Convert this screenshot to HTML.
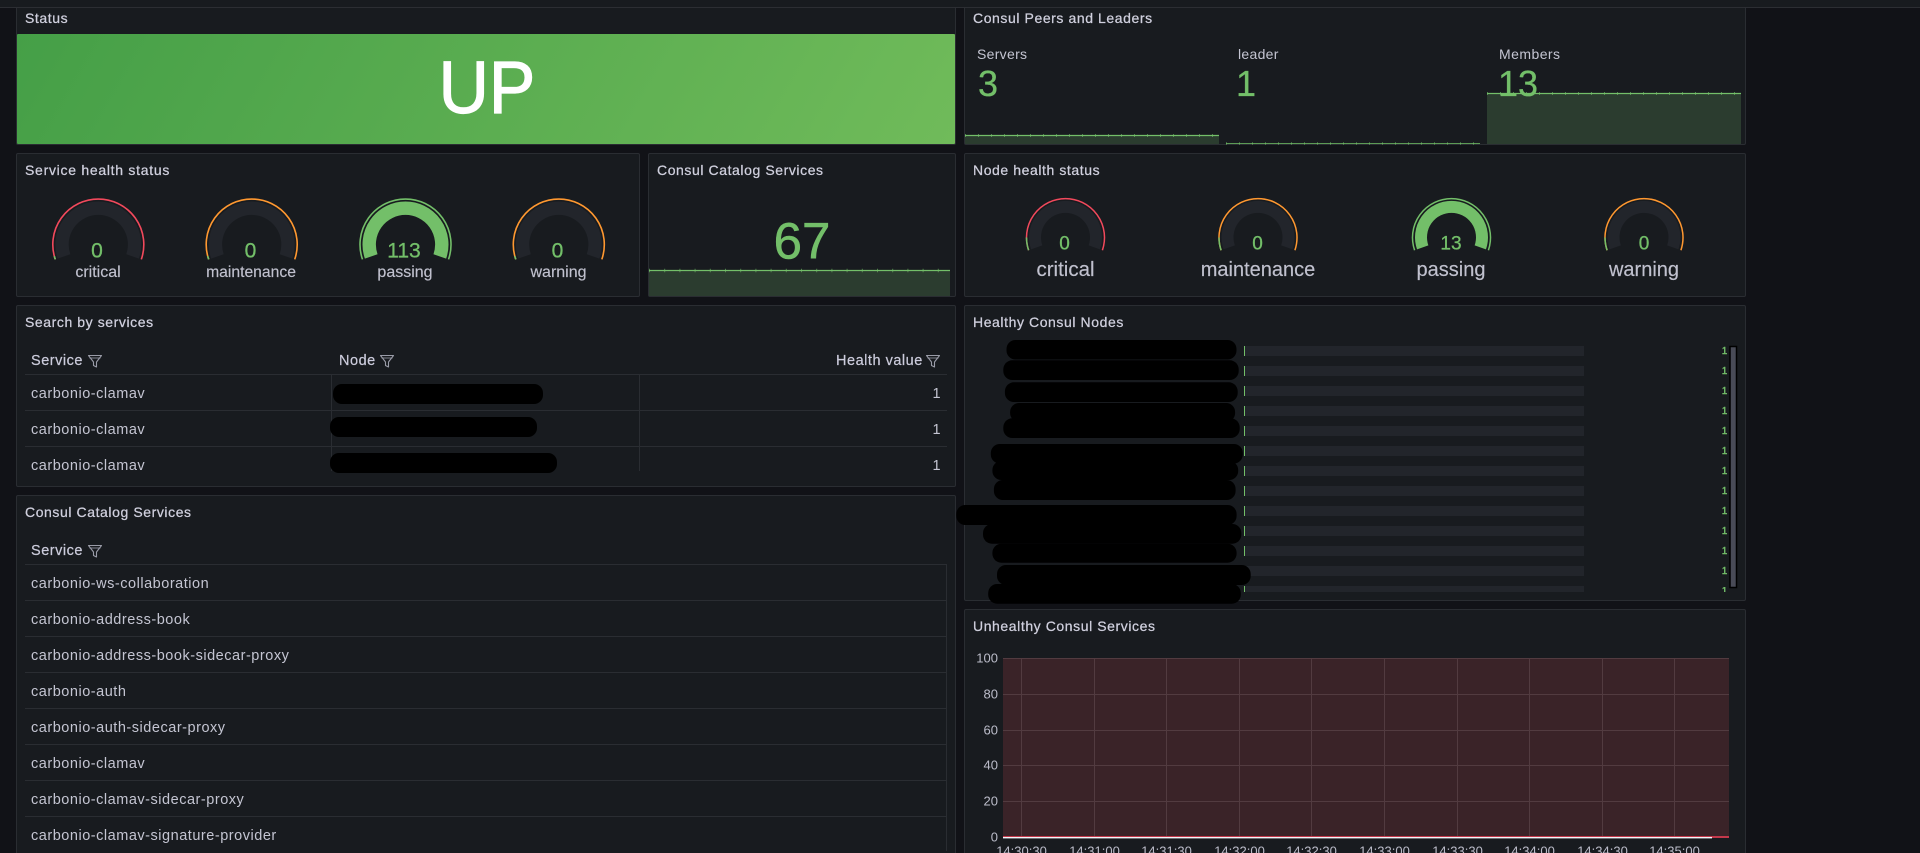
<!DOCTYPE html>
<html><head><meta charset="utf-8">
<style>
html,body{margin:0;padding:0;background:#111217;width:1920px;height:853px;overflow:hidden}
body{position:relative;font-family:"Liberation Sans",sans-serif;color:#ccccdc}
#w{position:absolute;left:0;top:0;width:1920px;height:853px;overflow:hidden}
.p{position:absolute;box-sizing:border-box;background:#181b1f;border:1px solid #2a2d32;border-radius:2px}
.t{position:absolute;font-size:14px;letter-spacing:.58px;line-height:18px;white-space:nowrap;color:#d0d0de;-webkit-text-stroke:.25px #d0d0de}
.x{position:absolute;white-space:nowrap;font-size:14.5px;letter-spacing:.52px;line-height:18px;color:#c4c5d2}
.c{position:absolute;white-space:nowrap;transform:translate(-50%,-50%);line-height:1}
.g{color:#73bf69;-webkit-text-stroke:.3px #73bf69}
.h{color:#ccccdc;-webkit-text-stroke:.2px #ccccdc}
.a{position:absolute;left:0;top:0}
.l{color:#c0c1ce;-webkit-text-stroke:.15px #c0c1ce}
.y{font-size:13px;transform:translateY(-50%);color:#bcbdca;right:922px}
.z{font-size:13px;color:#bcbdca;top:851px}
.v{font-size:10px;-webkit-text-stroke:.4px #73bf69}
</style></head><body><div id="w">

<div class="p" style="left:16px;top:-20px;width:940px;height:165px"></div>
<div class="p" style="left:964px;top:-20px;width:782px;height:165px"></div>
<div class="p" style="left:16px;top:153px;width:624px;height:144px"></div>
<div class="p" style="left:648px;top:153px;width:308px;height:144px"></div>
<div class="p" style="left:964px;top:153px;width:782px;height:144px"></div>
<div class="p" style="left:16px;top:305px;width:940px;height:182px"></div>
<div class="p" style="left:964px;top:305px;width:782px;height:296px"></div>
<div class="p" style="left:16px;top:495px;width:940px;height:400px"></div>
<div class="p" style="left:964px;top:609px;width:782px;height:290px"></div>
<div style="position:absolute;left:0;top:0;width:1920px;height:7px;background:#181b1f"></div>
<div style="position:absolute;left:0;top:7px;width:1920px;height:1px;background:#2c2e33"></div>

<div style="position:absolute;left:17px;top:34px;width:938px;height:110px;background:linear-gradient(120deg,#459f47,#70bb5a);border-radius:1px"></div>
<div class="c" style="left:487px;top:88px;font-size:74px;color:#fff;transform:translate(-50%,-50%) scaleX(.94);-webkit-text-stroke:1.2px #fff">UP</div>

<div class="t" style="left:25px;top:9px">Status</div>
<div class="t" style="left:973px;top:9px">Consul Peers and Leaders</div>
<div class="t" style="left:25px;top:161px;letter-spacing:.72px">Service health status</div>
<div class="t" style="left:657px;top:161px">Consul Catalog Services</div>
<div class="t" style="left:973px;top:161px">Node health status</div>
<div class="t" style="left:25px;top:313px">Search by services</div>
<div class="t" style="left:973px;top:313px">Healthy Consul Nodes</div>
<div class="t" style="left:25px;top:503px">Consul Catalog Services</div>
<div class="t" style="left:973px;top:617px">Unhealthy Consul Services</div>

<svg class="a" width="1920" height="853" viewBox="0 0 1920 853" fill="none">
<!-- sparklines -->
<rect x="649" y="270" width="301" height="26" fill="#2b3c2f"/>
<line x1="649" y1="270.5" x2="950" y2="270.5" stroke="#73bf69" stroke-width="1.2"/>
<line x1="649" y1="270.5" x2="950" y2="270.5" stroke="#73bf69" stroke-width="3.5" stroke-dasharray="1 14.2" opacity=".6"/>
<rect x="965" y="135" width="254" height="9" fill="#2b3c2f"/>
<line x1="965" y1="135.5" x2="1219" y2="135.5" stroke="#73bf69" stroke-width="1.2"/>
<line x1="965" y1="135.5" x2="1219" y2="135.5" stroke="#73bf69" stroke-width="3" stroke-dasharray="1 12" opacity=".6"/>
<line x1="1226" y1="143.5" x2="1480" y2="143.5" stroke="#5c9a55" stroke-width="1"/>
<line x1="1226" y1="143.5" x2="1480" y2="143.5" stroke="#73bf69" stroke-width="2.5" stroke-dasharray="1 12" opacity=".6"/>
<rect x="1487" y="93" width="254" height="51" fill="#2b3c2f"/>
<line x1="1487" y1="93.5" x2="1741" y2="93.5" stroke="#73bf69" stroke-width="1.2"/>
<line x1="1487" y1="93.5" x2="1741" y2="93.5" stroke="#73bf69" stroke-width="3" stroke-dasharray="1 12" opacity=".6"/>

<!-- service gauges -->
<g transform="translate(98.3 244.6)"><path d="M-34.3 11.8A36.3 36.3 0 1 1 34.3 11.8" stroke="#22252b" stroke-width="13.4"/><path d="M-43 14.8A45.5 45.5 0 1 1 43 14.8" stroke="#f2495c" stroke-width="1.6"/><path d="M-43 14.8L-44 11.5" stroke="#73bf69" stroke-width="1.6"/></g>
<g transform="translate(251.7 244.6)"><path d="M-34.3 11.8A36.3 36.3 0 1 1 34.3 11.8" stroke="#22252b" stroke-width="13.4"/><path d="M-43 14.8A45.5 45.5 0 1 1 43 14.8" stroke="#ff9830" stroke-width="1.6"/><path d="M-43 14.8L-44 11.5" stroke="#73bf69" stroke-width="1.6"/></g>
<g transform="translate(405.5 244.6)"><path d="M-34.3 11.8A36.3 36.3 0 1 1 34.3 11.8" stroke="#73bf69" stroke-width="13.4"/><path d="M-43 14.8A45.5 45.5 0 1 1 43 14.8" stroke="#73bf69" stroke-width="1.6"/></g>
<g transform="translate(558.8 244.6)"><path d="M-34.3 11.8A36.3 36.3 0 1 1 34.3 11.8" stroke="#22252b" stroke-width="13.4"/><path d="M-43 14.8A45.5 45.5 0 1 1 43 14.8" stroke="#ff9830" stroke-width="1.6"/><path d="M-43 14.8L-44 11.5" stroke="#73bf69" stroke-width="1.6"/></g>
<!-- node gauges -->
<g transform="translate(1065.5 237.5)"><path d="M-28.8 9.9A30.5 30.5 0 1 1 28.8 9.9" stroke="#22252b" stroke-width="12"/><path d="M-36.9 12.7A39 39 0 1 1 36.9 12.7" stroke="#f2495c" stroke-width="1.5"/><path d="M-36.9 12.7A39 39 0 0 1 -39 0" stroke="#73bf69" stroke-width="1.5"/></g>
<g transform="translate(1258 237.5)"><path d="M-28.8 9.9A30.5 30.5 0 1 1 28.8 9.9" stroke="#22252b" stroke-width="12"/><path d="M-36.9 12.7A39 39 0 1 1 36.9 12.7" stroke="#ff9830" stroke-width="1.5"/><path d="M-36.9 12.7A39 39 0 0 1 -39 0" stroke="#73bf69" stroke-width="1.5"/></g>
<g transform="translate(1451.5 237.5)"><path d="M-28.8 9.9A30.5 30.5 0 1 1 28.8 9.9" stroke="#73bf69" stroke-width="12"/><path d="M-36.9 12.7A39 39 0 1 1 36.9 12.7" stroke="#73bf69" stroke-width="1.5"/></g>
<g transform="translate(1644 237.5)"><path d="M-28.8 9.9A30.5 30.5 0 1 1 28.8 9.9" stroke="#22252b" stroke-width="12"/><path d="M-36.9 12.7A39 39 0 1 1 36.9 12.7" stroke="#ff9830" stroke-width="1.5"/><path d="M-36.9 12.7A39 39 0 0 1 -39 0" stroke="#73bf69" stroke-width="1.5"/></g>

<!-- table lines -->
<g stroke="#2a2d32" stroke-width="1">
<path d="M25 374.5H947M25 410.5H947M25 446.5H947"/>
<path d="M331.5 375V471M639.5 375V471"/>
<path d="M25 564.5H947M25 600.5H947M25 636.5H947M25 672.5H947M25 708.5H947M25 744.5H947M25 780.5H947M25 816.5H947"/>
<path d="M946.5 565V851"/>
</g>
<!-- filter icons -->
<g stroke="#9a9ca8" stroke-width="1.1" stroke-linejoin="round">
<path d="M88.5 355.5H101.5L96.5 362V367L93.5 365.5V362Z"/>
<path d="M89.5 358H100.5" stroke-width=".8"/>
<path d="M380.5 355.5H393.5L388.5 362V367L385.5 365.5V362Z"/>
<path d="M381.5 358H392.5" stroke-width=".8"/>
<path d="M926.5 355.5H939.5L934.5 362V367L931.5 365.5V362Z"/>
<path d="M927.5 358H938.5" stroke-width=".8"/>
<path d="M88.5 545.5H101.5L96.5 552V557L93.5 555.5V552Z"/>
<path d="M89.5 548H100.5" stroke-width=".8"/>
</g>

<!-- bar gauges -->
<g fill="#22252b">
<rect x="1245" y="346" width="339" height="10"/><rect x="1245" y="366" width="339" height="10"/><rect x="1245" y="386" width="339" height="10"/><rect x="1245" y="406" width="339" height="10"/><rect x="1245" y="426" width="339" height="10"/><rect x="1245" y="446" width="339" height="10"/><rect x="1245" y="466" width="339" height="10"/><rect x="1245" y="486" width="339" height="10"/><rect x="1245" y="506" width="339" height="10"/><rect x="1245" y="526" width="339" height="10"/><rect x="1245" y="546" width="339" height="10"/><rect x="1245" y="566" width="339" height="10"/><rect x="1245" y="586" width="339" height="6"/>
</g>
<g fill="#73bf69">
<rect x="1244" y="346" width="1" height="10"/><rect x="1244" y="366" width="1" height="10"/><rect x="1244" y="386" width="1" height="10"/><rect x="1244" y="406" width="1" height="10"/><rect x="1244" y="426" width="1" height="10"/><rect x="1244" y="446" width="1" height="10"/><rect x="1244" y="466" width="1" height="10"/><rect x="1244" y="486" width="1" height="10"/><rect x="1244" y="506" width="1" height="10"/><rect x="1244" y="526" width="1" height="10"/><rect x="1244" y="546" width="1" height="10"/><rect x="1244" y="566" width="1" height="10"/><rect x="1244" y="586" width="1" height="6"/>
</g>
<rect x="1730" y="346.5" width="6.5" height="241" fill="#494b57" stroke="#000" stroke-width="1.5"/>

<!-- time series -->
<rect x="1003" y="658" width="726" height="180" fill="#3a2328"/>
<g stroke="#523b40" stroke-width="1">
<path d="M1003 658.5H1729M1003 694.5H1729M1003 730.5H1729M1003 765.5H1729M1003 801.5H1729"/>
<path d="M1021.5 658V837M1094.5 658V837M1166.5 658V837M1239.5 658V837M1311.5 658V837M1384.5 658V837M1457.5 658V837M1529.5 658V837M1602.5 658V837M1674.5 658V837"/>
</g>
<rect x="1003" y="836" width="726" height="2" fill="#c4384b"/>
<rect x="1003" y="837" width="709" height="1.4" fill="#f2f6fa"/>

<!-- redactions -->
<g fill="#000">
<rect x="333" y="384" width="210" height="20" rx="9"/>
<rect x="330" y="417" width="207" height="20" rx="9"/>
<rect x="330" y="453" width="227" height="20" rx="9"/>
<rect x="1006.5" y="340" width="230" height="19.5" rx="9"/>
<rect x="1003.3" y="360.3" width="235.4" height="19.7" rx="9"/>
<rect x="1004.9" y="382.3" width="232.8" height="19.7" rx="9"/>
<rect x="1010.1" y="403" width="225" height="19" rx="9"/>
<rect x="1003.3" y="418.3" width="236.4" height="19.7" rx="9"/>
<rect x="990.8" y="444" width="252" height="19.5" rx="9"/>
<rect x="992.4" y="461" width="245.8" height="19" rx="9"/>
<rect x="993.9" y="480" width="241.7" height="20" rx="9"/>
<rect x="956.3" y="505" width="280.3" height="20" rx="9"/>
<rect x="983" y="524" width="258.3" height="19.7" rx="9"/>
<rect x="992.4" y="543.7" width="244.2" height="19" rx="9"/>
<rect x="997" y="565" width="253.7" height="20" rx="9"/>
<rect x="988.2" y="584" width="252.6" height="19.7" rx="9"/>
</g>
</svg>

<!-- stat -->
<div class="c g" style="left:802px;top:241px;font-size:51px;-webkit-text-stroke:.6px #73bf69">67</div>
<div class="x" style="left:977px;top:45px;font-size:14px;letter-spacing:.3px">Servers</div>
<div class="x" style="left:1238px;top:45px;font-size:14px;letter-spacing:.3px">leader</div>
<div class="x" style="left:1499px;top:45px;font-size:14px;letter-spacing:.45px">Members</div>
<div class="c g" style="left:988px;top:84px;font-size:36px">3</div>
<div class="c g" style="left:1246px;top:84px;font-size:36px">1</div>
<div class="c g" style="left:1518px;top:84px;font-size:36px">13</div>

<!-- gauge text -->
<div class="c g" style="left:97px;top:251px;font-size:21px">0</div>
<div class="c g" style="left:250.5px;top:251px;font-size:21px">0</div>
<div class="c g" style="left:404px;top:251px;font-size:21px">113</div>
<div class="c g" style="left:557.5px;top:251px;font-size:21px">0</div>
<div class="c l" style="left:98px;top:272.5px;font-size:16px">critical</div>
<div class="c l" style="left:251px;top:272.5px;font-size:15.7px">maintenance</div>
<div class="c l" style="left:405px;top:272.5px;font-size:16px">passing</div>
<div class="c l" style="left:558.5px;top:272.5px;font-size:16px">warning</div>

<div class="c g" style="left:1064.5px;top:244px;font-size:19px">0</div>
<div class="c g" style="left:1257.5px;top:244px;font-size:19px">0</div>
<div class="c g" style="left:1451px;top:244px;font-size:19px">13</div>
<div class="c g" style="left:1644px;top:244px;font-size:19px">0</div>
<div class="c l" style="left:1065.5px;top:270px;font-size:20.5px">critical</div>
<div class="c l" style="left:1258px;top:270px;font-size:20px">maintenance</div>
<div class="c l" style="left:1451px;top:270px;font-size:20px">passing</div>
<div class="c l" style="left:1644px;top:270px;font-size:20px">warning</div>

<!-- table 1 -->
<div class="x h" style="left:31px;top:352px">Service</div>
<div class="x h" style="left:339px;top:352px">Node</div>
<div class="x h" style="left:836px;top:352px">Health value</div>
<div class="x" style="left:31px;top:385px">carbonio-clamav</div>
<div class="x" style="left:31px;top:421px">carbonio-clamav</div>
<div class="x" style="left:31px;top:457px">carbonio-clamav</div>
<div class="x" style="left:932.5px;top:385px">1</div>
<div class="x" style="left:932.5px;top:421px">1</div>
<div class="x" style="left:932.5px;top:457px">1</div>

<!-- table 2 -->
<div class="x h" style="left:31px;top:542px">Service</div>
<div class="x" style="left:31px;top:575px">carbonio-ws-collaboration</div>
<div class="x" style="left:31px;top:611px">carbonio-address-book</div>
<div class="x" style="left:31px;top:647px">carbonio-address-book-sidecar-proxy</div>
<div class="x" style="left:31px;top:683px">carbonio-auth</div>
<div class="x" style="left:31px;top:719px">carbonio-auth-sidecar-proxy</div>
<div class="x" style="left:31px;top:755px">carbonio-clamav</div>
<div class="x" style="left:31px;top:791px">carbonio-clamav-sidecar-proxy</div>
<div class="x" style="left:31px;top:827px">carbonio-clamav-signature-provider</div>

<!-- bar gauge values -->
<div class="c g v" style="left:1724.5px;top:352px">1</div>
<div class="c g v" style="left:1724.5px;top:372px">1</div>
<div class="c g v" style="left:1724.5px;top:392px">1</div>
<div class="c g v" style="left:1724.5px;top:412px">1</div>
<div class="c g v" style="left:1724.5px;top:432px">1</div>
<div class="c g v" style="left:1724.5px;top:452px">1</div>
<div class="c g v" style="left:1724.5px;top:472px">1</div>
<div class="c g v" style="left:1724.5px;top:492px">1</div>
<div class="c g v" style="left:1724.5px;top:512px">1</div>
<div class="c g v" style="left:1724.5px;top:532px">1</div>
<div class="c g v" style="left:1724.5px;top:552px">1</div>
<div class="c g v" style="left:1724.5px;top:572px">1</div>
<div style="position:absolute;left:1715px;top:587px;width:20px;height:5px;overflow:hidden"><div class="c g v" style="left:9.5px;top:5px">1</div></div>

<!-- axes -->
<div class="c y" style="top:658px">100</div>
<div class="c y" style="top:694px">80</div>
<div class="c y" style="top:730px">60</div>
<div class="c y" style="top:765px">40</div>
<div class="c y" style="top:801px">20</div>
<div class="c y" style="top:837px">0</div>
<div class="c z" style="left:1021.5px">14:30:30</div>
<div class="c z" style="left:1094.5px">14:31:00</div>
<div class="c z" style="left:1166.5px">14:31:30</div>
<div class="c z" style="left:1239.5px">14:32:00</div>
<div class="c z" style="left:1311.5px">14:32:30</div>
<div class="c z" style="left:1384.5px">14:33:00</div>
<div class="c z" style="left:1457.5px">14:33:30</div>
<div class="c z" style="left:1529.5px">14:34:00</div>
<div class="c z" style="left:1602.5px">14:34:30</div>
<div class="c z" style="left:1674.5px">14:35:00</div>
</div></body></html>
